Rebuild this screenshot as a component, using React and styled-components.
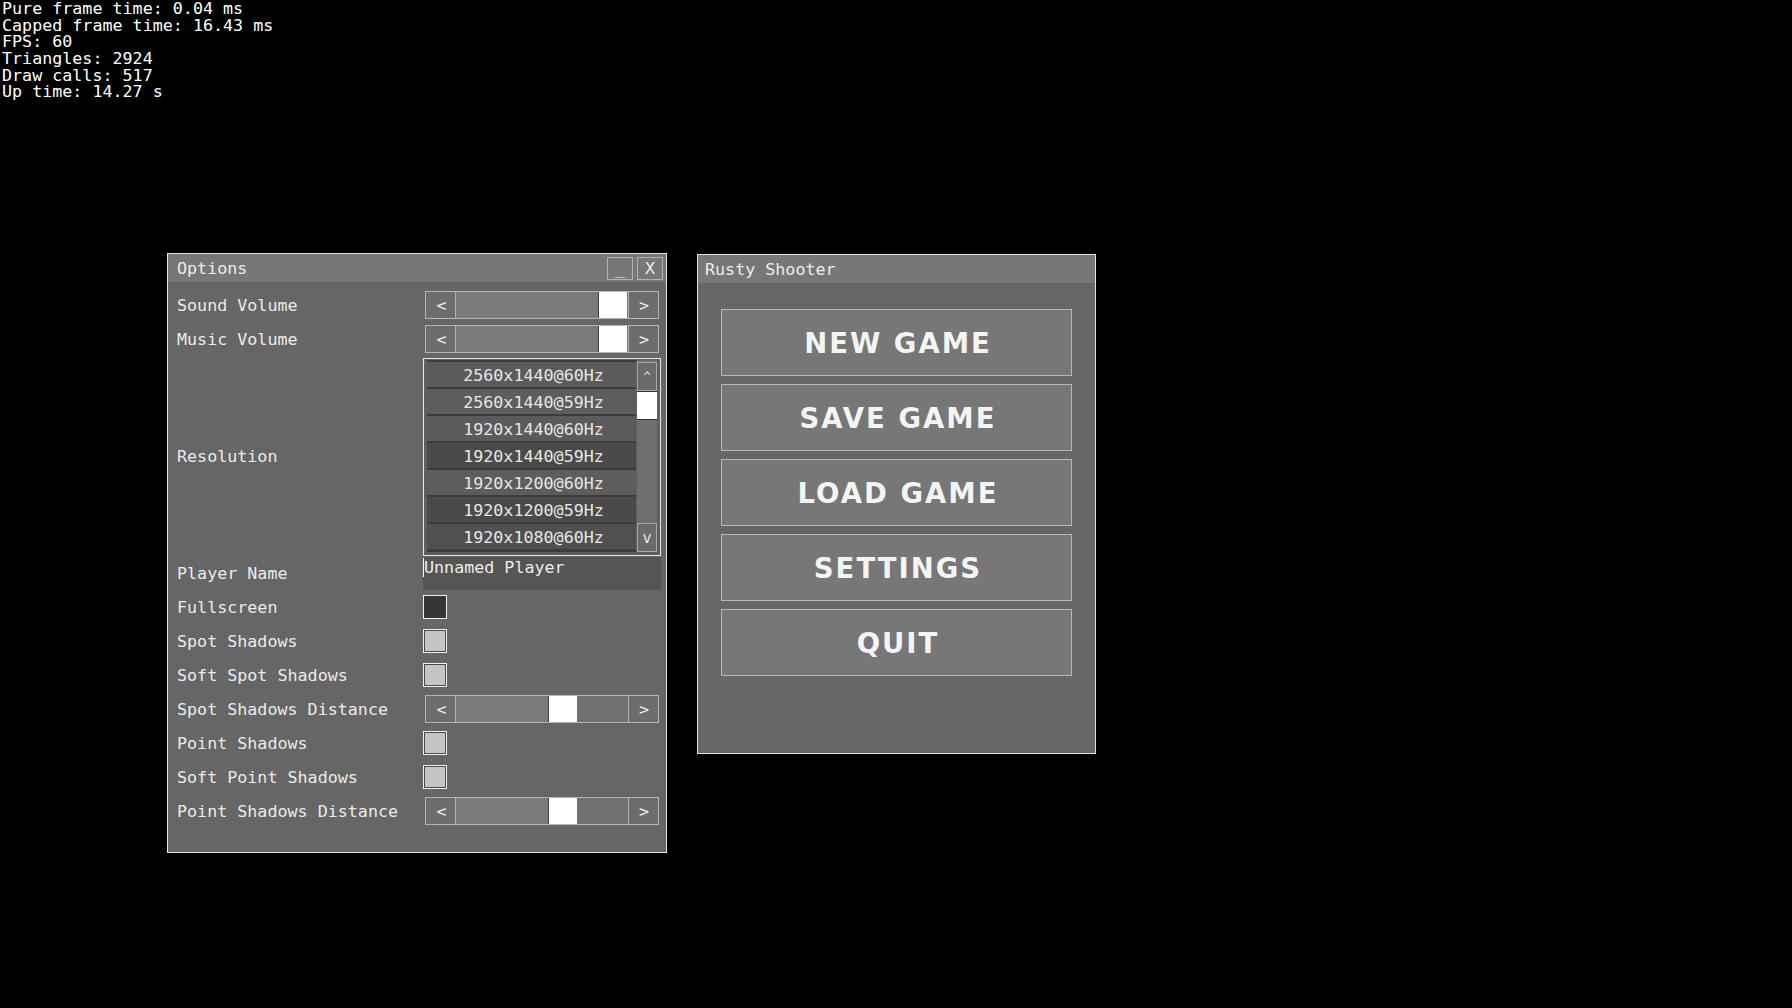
import React from "react";
import styled, { createGlobalStyle } from "styled-components";

const Global = createGlobalStyle`
  html, body { margin: 0; padding: 0; background: #000; }
  body { font-family: "DejaVu Sans Mono", "Liberation Mono", monospace; }
  #root { width: 1792px; height: 1008px; position: relative; overflow: hidden; }
`;

const MONO = `"DejaVu Sans Mono", "Liberation Mono", monospace`;

const Stats = styled.div`
  padding: 0 0 0 2px;
  font-family: ${MONO};
  font-size: 16.7px;
  line-height: 16.7px;
  color: #ffffff;
  white-space: pre;
`;

const StatLine = styled.div`
  height: 16.7px;
`;

const Win = styled.div`
  position: absolute;
  left: ${(p) => p.$x}px;
  top: ${(p) => p.$y}px;
  width: ${(p) => p.$w}px;
  height: ${(p) => p.$h}px;
  box-sizing: border-box;
  border: 1px solid #e2e2e2;
  background: #666666;
  display: flex;
  flex-direction: column;
`;

const TitleBar = styled.div`
  height: 28px;
  flex: none;
  background: #777777;
  display: flex;
  align-items: center;
  padding: 0 3px 0 ${(p) => p.$pad}px;
  font-family: ${MONO};
  font-size: 16.7px;
  color: #ececec;
`;

const TitleText = styled.div`
  flex: 1;
`;

const TitleBtn = styled.div`
  width: 26px;
  height: 23px;
  box-sizing: border-box;
  border: 1px solid #b2b2b2;
  margin-left: 4px;
  display: flex;
  align-items: center;
  justify-content: center;
  font-family: ${MONO};
  font-size: 16.7px;
  color: #eeeeee;
`;

const OptionsBody = styled.div`
  padding: 6px 5px 0 0;
  display: grid;
  grid-template-columns: 255px 1fr;
  grid-template-rows: 34px 34px 200px repeat(8, 34px);
`;

const Label = styled.div`
  display: flex;
  align-items: center;
  padding-left: 9px;
  font-family: ${MONO};
  font-size: 16.7px;
  color: #ebebeb;
  white-space: nowrap;
`;

const Cell = styled.div`
  display: flex;
  align-items: ${(p) => p.$top ? "flex-start" : "center"};
`;

const SliderBox = styled.div`
  margin-left: 2px;
  width: 234px;
  height: 28px;
  box-sizing: border-box;
  border: 1px solid #b4b4b4;
  display: flex;
  background: #6f6f6f;
`;

const SliderBtn = styled.div`
  width: 30px;
  flex: none;
  background: #6d6d6d;
  ${(p) => p.$side === "left" ? "border-right: 1px solid #b4b4b4;" : "border-left: 1px solid #b4b4b4;"}
  display: flex;
  align-items: center;
  justify-content: center;
  padding-left: ${(p) => p.$side === "left" ? 2 : 1}px;
  box-sizing: border-box;
  font-family: ${MONO};
  font-size: 16.7px;
  color: #ececec;
`;

const Track = styled.div`
  flex: 1;
  display: flex;
  background: #707070;
`;

const Fill = styled.div`
  background: #7a7a7a;
  flex: none;
`;

const Thumb = styled.div`
  width: 28px;
  flex: none;
  background: #ffffff;
  border-left: 1px solid #3e3e3e;
`;

function Slider({ value }) {
  const w = Math.round(142 * value);
  return (
    <SliderBox>
      <SliderBtn $side="left">&lt;</SliderBtn>
      <Track>
        <Fill style={{ width: w }} />
        <Thumb />
      </Track>
      <SliderBtn $side="right">&gt;</SliderBtn>
    </SliderBox>
  );
}

const ListBox = styled.div`
  margin-top: 2px;
  width: 238px;
  height: 198px;
  box-sizing: border-box;
  border: 1px solid #e6e6e6;
  background: #5f5f5f;
  padding: 1px 3px 3px 3px;
  display: flex;
`;

const Items = styled.div`
  flex: 1;
  overflow: hidden;
  display: flex;
  flex-direction: column;
  background: #3c3c3c;
`;

const Item = styled.div`
  height: 25px;
  flex: none;
  border-top: 2px solid #3c3c3c;
  background: ${(p) => p.$bg};
  display: flex;
  align-items: center;
  justify-content: center;
  padding-left: 4px;
  font-family: ${MONO};
  font-size: 16.7px;
  color: #e6e6e6;
`;

const ScrollBar = styled.div`
  width: 20px;
  flex: none;
  margin-left: 1px;
  display: flex;
  flex-direction: column;
  background: #6f6f6f;
  padding-top: 2px;
`;

const ScrollBtn = styled.div`
  height: 29px;
  flex: none;
  box-sizing: border-box;
  border: 1px solid #a8a8a8;
  background: #6a6a6a;
  display: flex;
  align-items: center;
  justify-content: center;
  font-family: ${MONO};
  font-size: ${(p) => p.$small ? 12 : 15}px;
  color: #e4e4e4;
`;

const ScrollThumb = styled.div`
  height: 29px;
  flex: none;
  box-sizing: border-box;
  background: #ffffff;
  border-top: 1px solid #333;
  border-bottom: 1px solid #333;
`;

const ScrollTrack = styled.div`
  flex: 1;
`;

const TextBox = styled.div`
  margin-top: 1px;
  width: 238px;
  height: 33px;
  box-sizing: border-box;
  background: #555555;
  display: flex;
  align-items: flex-start;
  font-family: ${MONO};
  font-size: 16.7px;
  line-height: 20px;
  color: #ececec;
  &::before {
    content: "";
    display: block;
    width: 1px;
    height: 19px;
    margin-top: 1px;
    background: #ffffff;
  }
`;

const Check = styled.div`
  width: 24px;
  height: 24px;
  box-sizing: border-box;
  border: 1px solid #f0f0f0;
  background: ${(p) => p.$on ? "#c4c4c4" : "#353535"};
  box-shadow: inset 0 0 0 1px ${(p) => p.$on ? "#4a4a4a" : "#353535"};
`;

const MenuBody = styled.div`
  padding: 26px 23px 0 23px;
  display: flex;
  flex-direction: column;
  gap: 8px;
`;

const MenuButton = styled.div`
  height: 67px;
  box-sizing: border-box;
  border: 1px solid #b8b8b8;
  background: #777777;
  display: flex;
  align-items: center;
  justify-content: center;
  padding-left: 3px;
  font-family: "DejaVu Sans", "Liberation Sans", sans-serif;
  font-weight: 700;
  font-size: 27.5px;
  letter-spacing: 2px;
  color: #f4f4f4;
`;

const resolutions = [
  ["2560x1440@60Hz", "#5b5b5b"],
  ["2560x1440@59Hz", "#5d5d5d"],
  ["1920x1440@60Hz", "#5b5b5b"],
  ["1920x1440@59Hz", "#4a4a4a"],
  ["1920x1200@60Hz", "#5d5d5d"],
  ["1920x1200@59Hz", "#4a4a4a"],
  ["1920x1080@60Hz", "#505050"],
];

const stats = [
  "Pure frame time: 0.04 ms",
  "Capped frame time: 16.43 ms",
  "FPS: 60",
  "Triangles: 2924",
  "Draw calls: 517",
  "Up time: 14.27 s",
];

export default function App() {
  return (
    <>
      <Global />
      <Stats>
        {stats.map((s) => (
          <StatLine key={s}>{s}</StatLine>
        ))}
      </Stats>

      <Win $x={167} $y={253} $w={500} $h={600}>
        <TitleBar $pad={9}>
          <TitleText>Options</TitleText>
          <TitleBtn>_</TitleBtn>
          <TitleBtn>X</TitleBtn>
        </TitleBar>
        <OptionsBody>
          <Label>Sound Volume</Label>
          <Cell><Slider value={1} /></Cell>
          <Label>Music Volume</Label>
          <Cell><Slider value={1} /></Cell>
          <Label>Resolution</Label>
          <Cell $top>
            <ListBox>
              <Items>
                {resolutions.map(([r, bg]) => (
                  <Item key={r} $bg={bg}>{r}</Item>
                ))}
              </Items>
              <ScrollBar>
                <ScrollBtn $small>^</ScrollBtn>
                <ScrollThumb />
                <ScrollTrack />
                <ScrollBtn>v</ScrollBtn>
              </ScrollBar>
            </ListBox>
          </Cell>
          <Label>Player Name</Label>
          <Cell $top>
            <TextBox>Unnamed Player</TextBox>
          </Cell>
          <Label>Fullscreen</Label>
          <Cell><Check /></Cell>
          <Label>Spot Shadows</Label>
          <Cell><Check $on /></Cell>
          <Label>Soft Spot Shadows</Label>
          <Cell><Check $on /></Cell>
          <Label>Spot Shadows Distance</Label>
          <Cell><Slider value={0.65} /></Cell>
          <Label>Point Shadows</Label>
          <Cell><Check $on /></Cell>
          <Label>Soft Point Shadows</Label>
          <Cell><Check $on /></Cell>
          <Label>Point Shadows Distance</Label>
          <Cell><Slider value={0.65} /></Cell>
        </OptionsBody>
      </Win>

      <Win $x={697} $y={254} $w={399} $h={500}>
        <TitleBar $pad={7}>
          <TitleText>Rusty Shooter</TitleText>
        </TitleBar>
        <MenuBody>
          <MenuButton>NEW GAME</MenuButton>
          <MenuButton>SAVE GAME</MenuButton>
          <MenuButton>LOAD GAME</MenuButton>
          <MenuButton>SETTINGS</MenuButton>
          <MenuButton>QUIT</MenuButton>
        </MenuBody>
      </Win>
    </>
  );
}
